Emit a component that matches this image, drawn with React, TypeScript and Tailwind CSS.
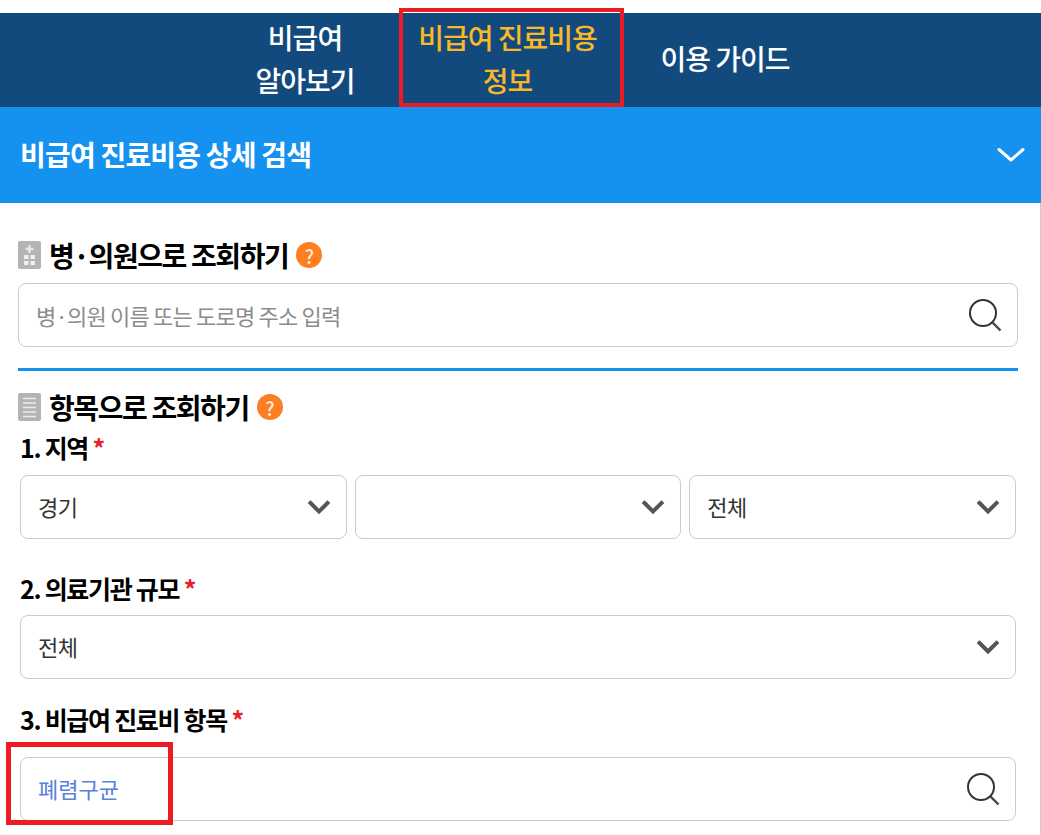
import React from 'react';

const FONT = "font-['Noto_Sans_CJK_KR','Noto_Sans',sans-serif]";

function SearchIcon() {
  return (
    <svg width="36" height="36" viewBox="0 0 36 36" fill="none">
      <circle cx="16" cy="16" r="13" stroke="#333" strokeWidth="2" />
      <path d="M25.500 25.500L33.500 33.500" stroke="#444" strokeWidth="2.4" />
    </svg>
  );
}

function Chevron() {
  return (
    <svg width="24" height="16" viewBox="0 0 24 16" fill="none">
      <path d="M3.500 4L12 12.500L20.500 4" stroke="#555" strokeWidth="4" strokeLinecap="square" />
    </svg>
  );
}

function ChevronWhite() {
  return (
    <svg width="28" height="16" viewBox="0 0 28 16" fill="none">
      <path d="M2 2.500L14 13L26 2.500" stroke="#fff" strokeWidth="3" strokeLinecap="round" strokeLinejoin="round" />
    </svg>
  );
}

function HelpBadge() {
  return (
    <span className="ml-2 flex h-[26px] w-[26px] shrink-0 items-center justify-center rounded-full bg-[#fd7e23] text-[19px] font-medium leading-none text-[#ffeede]">
      ?
    </span>
  );
}

function HospitalIcon() {
  return (
    <svg width="23" height="28" viewBox="0 0 23 28" className="shrink-0">
      <rect width="23" height="28" rx="2" fill="#b4b4b4" />
      <path d="M11.500 4V12M7.500 8H15.500" stroke="#e8e8e8" strokeWidth="2.4" />
      <rect x="6" y="14" width="4.500" height="4" fill="#f0f0f0" />
      <rect x="12.500" y="14" width="4.500" height="4" fill="#f0f0f0" />
      <rect x="6" y="20" width="4.500" height="4" fill="#f0f0f0" />
      <rect x="12.500" y="20" width="4.500" height="4" fill="#f0f0f0" />
    </svg>
  );
}

function ListIcon() {
  return (
    <svg width="23" height="28" viewBox="0 0 23 28" className="shrink-0">
      <rect width="23" height="28" rx="2" fill="#b4b4b4" />
      <path d="M5 5.500H18M5 10H18M5 14.500H18M5 19H18M5 23.500H18" stroke="#ececec" strokeWidth="1.6" />
    </svg>
  );
}

function SectionTitle({ icon, children }: { icon: React.ReactNode; children: React.ReactNode }) {
  return (
    <div className="flex h-[28px] items-center">
      {icon}
      <h3 className="ml-[8px] text-[28px] font-bold leading-[28px] tracking-[-1.4px] text-black">{children}</h3>
      <HelpBadge />
    </div>
  );
}

function FieldLabel({ children }: { children: React.ReactNode }) {
  return (
    <div className="ml-[2px] text-[25px] font-bold leading-[30px] tracking-[-1.3px] text-black">
      {children} <span className="text-[#e8202a]">*</span>
    </div>
  );
}

function SelectBox({ value }: { value?: string }) {
  return (
    <div className="flex h-[64px] flex-1 items-center justify-between rounded-[8px] border border-[#cccccc] pl-[17px] pr-[15px] text-[22px] tracking-[-0.5px] text-[#333]">
      <span className="mb-[2px]">{value}</span>
      <Chevron />
    </div>
  );
}

export default function App() {
  return (
    <div className={`relative h-[835px] w-[1041px] overflow-hidden bg-white pt-[13px] ${FONT}`}>
      {/* Top nav */}
      <nav className="flex h-[94px] items-center bg-[#134a7e] pb-[3px] pl-[231px] text-center text-[28px] font-medium leading-[43px] tracking-[-1px] text-white">
        <a className="w-[148px]">
          비급여
          <br />
          알아보기
        </a>
        <a className="ml-[16px] w-[225px] text-[#fbb825]">
          비급여 진료비용
          <br />
          정보
        </a>
        <a className="ml-[15px] w-[180px]">이용 가이드</a>
      </nav>

      {/* Accordion header */}
      <div className="flex h-[96px] items-center justify-between bg-[#1592ef] pl-[20px] pr-[16px]">
        <h2 className="mb-[2px] text-[28px] font-bold tracking-[-0.8px] text-white">비급여 진료비용 상세 검색</h2>
        <ChevronWhite />
      </div>

      {/* Search form */}
      <div className="h-[632px] border-r border-[#cccccc] pl-[18px] pr-[22px] pt-[38px]">
        <SectionTitle icon={<HospitalIcon />}>병·의원으로 조회하기</SectionTitle>
        <div className="mt-[14px] flex h-[64px] items-center justify-between rounded-[8px] border border-[#cccccc] pl-[17px] pr-[14px]">
          <span className="text-[22px] tracking-[-0.8px] text-[#8c8c8c]">병·의원 이름 또는 도로명 주소 입력</span>
          <SearchIcon />
        </div>
        <div className="mt-[21px] h-[3px] bg-[#1592ef]" />

        <div className="mt-[22px]">
          <SectionTitle icon={<ListIcon />}>항목으로 조회하기</SectionTitle>
        </div>
        <div className="mt-[11px]">
          <FieldLabel>1. 지역</FieldLabel>
        </div>
        <div className="ml-[2px] mr-[2px] mt-[13px] flex gap-[8px]">
          <SelectBox value="경기" />
          <SelectBox />
          <SelectBox value="전체" />
        </div>

        <div className="mt-[34px]">
          <FieldLabel>2. 의료기관 규모</FieldLabel>
        </div>
        <div className="ml-[2px] mr-[2px] mt-[12px] flex">
          <SelectBox value="전체" />
        </div>

        <div className="mt-[25px]">
          <FieldLabel>3. 비급여 진료비 항목</FieldLabel>
        </div>
        <div className="ml-[2px] mr-[2px] mt-[23px] flex h-[64px] items-center justify-between rounded-[8px] border border-[#cccccc] pl-[17px] pr-[14px]">
          <span className="mb-[2px] text-[22px] text-[#5a80dc]">폐렴구균</span>
          <SearchIcon />
        </div>
      </div>

      {/* Red annotation boxes */}
      <div className="absolute left-[399px] top-[8px] h-[99px] w-[225px] border-[4px] border-[#ed1c24]" />
      <div className="absolute left-[6px] top-[742px] h-[83px] w-[167px] border-[5px] border-[#ed1c24]" />
    </div>
  );
}
